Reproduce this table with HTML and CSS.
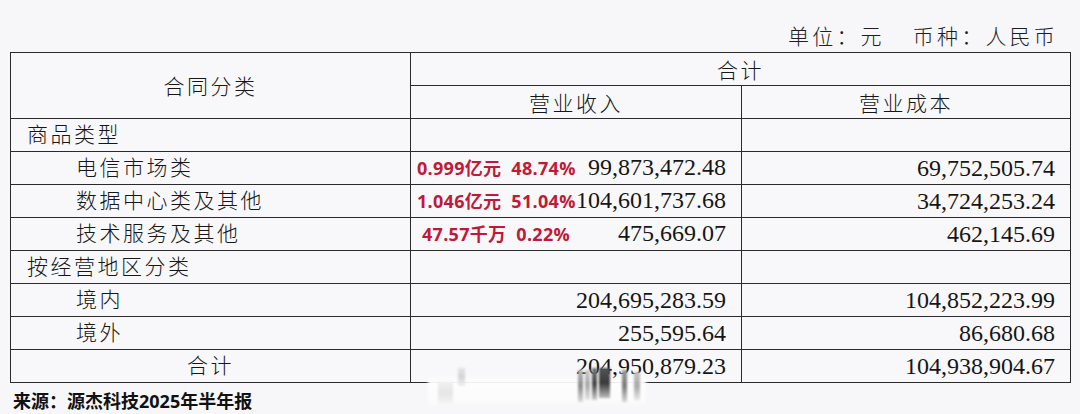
FILE: index.html
```html
<!DOCTYPE html>
<html lang="zh-CN">
<head>
<meta charset="utf-8">
<title>合同分类</title>
<link rel="stylesheet" href="styles.css">
</head>
<body>
<div class="page">
  <div class="unit"><span>单位：元</span><span class="unit-gap"></span><span>币种：人民币</span></div>
  <table class="report">
    <colgroup><col class="c1"><col class="c2"><col class="c3"></colgroup>
    <thead>
      <tr><th rowspan="2" class="head-main">合同分类</th><th colspan="2">合计</th></tr>
      <tr><th>营业收入</th><th>营业成本</th></tr>
    </thead>
    <tbody>
      <tr><td class="lv1">商品类型</td><td></td><td></td></tr>
      <tr><td class="lv2">电信市场类</td><td class="num"><div class="split"><span class="note">0.999亿元&nbsp;&nbsp;48.74%</span><span>99,873,472.48</span></div></td><td class="num">69,752,505.74</td></tr>
      <tr><td class="lv2">数据中心类及其他</td><td class="num"><div class="split"><span class="note">1.046亿元&nbsp;&nbsp;51.04%</span><span>104,601,737.68</span></div></td><td class="num">34,724,253.24</td></tr>
      <tr><td class="lv2">技术服务及其他</td><td class="num"><div class="split"><span class="note">&nbsp;47.57千万&nbsp;&nbsp;0.22%</span><span>475,669.07</span></div></td><td class="num">462,145.69</td></tr>
      <tr><td class="lv1">按经营地区分类</td><td></td><td></td></tr>
      <tr><td class="lv2">境内</td><td class="num">204,695,283.59</td><td class="num">104,852,223.99</td></tr>
      <tr><td class="lv2">境外</td><td class="num">255,595.64</td><td class="num">86,680.68</td></tr>
      <tr><td class="total">合计</td><td class="num">204,950,879.23</td><td class="num">104,938,904.67</td></tr>
    </tbody>
  </table>
  <div class="source">来源：源杰科技2025年半年报</div>
  <div class="smudge" aria-hidden="true">
    <i class="band"></i>
    <i class="bar b1"></i><i class="bar b2"></i><i class="bar b3"></i><i class="bar b4"></i>
    <i class="bar b5"></i><i class="bar b6"></i><i class="bar b7"></i><i class="bar b8"></i>
  </div>
</div>
</body>
</html>
```

FILE: styles.css
```css
* { box-sizing: border-box; }
html, body { margin: 0; padding: 0; background: #f7f7f9; }
body {
  width: 1080px;
  height: 414px;
  overflow: hidden;
  color: #161616;
  font-family: "Liberation Serif", "Noto Sans CJK SC", serif;
}
.page { position: relative; width: 1080px; height: 414px; }

.unit {
  display: flex;
  justify-content: flex-end;
  align-items: flex-end;
  height: 52px;
  padding: 0 22px 5px 0;
  font-family: "Noto Sans CJK SC", sans-serif;
  font-weight: 300;
  font-size: 21px;
  letter-spacing: 3.2px;
  line-height: 24px;
  color: #1e1e1e;
}
.unit-gap { width: 28px; }

.report {
  margin-left: 10px;
  width: 1060px;
  table-layout: fixed;
  border-collapse: collapse;
  background: #f8f8fa;
}
.c1 { width: 400px; }
.c2 { width: 331px; }
.c3 { width: 329px; }

.report tr { height: 33px; }
.report th, .report td {
  border: 1px solid #2a2a2a;
  padding: 0;
  line-height: 31px;
  white-space: nowrap;
}
.report th {
  font-family: "Noto Sans CJK SC", sans-serif;
  font-weight: 300;
  font-size: 21px;
  letter-spacing: 2.5px;
  text-align: center;
}

.report .lv1, .report .lv2, .report .total {
  font-family: "Noto Sans CJK SC", sans-serif;
  font-weight: 300;
  font-size: 21px;
  letter-spacing: 2.5px;
  line-height: 28px;
  vertical-align: top;
}
.report .lv1 { padding-left: 16px; }
.report .lv2 { padding-left: 65px; }
.report .total { text-align: center; }

.report .num {
  font-family: "Liberation Serif", serif;
  font-size: 24px;
  text-align: right;
  padding-right: 15px;
}
.split {
  display: flex;
  justify-content: space-between;
  align-items: baseline;
  padding-left: 6px;
}
.note {
  font-family: "Open Sans", "Noto Sans CJK SC", sans-serif;
  font-weight: 700;
  font-size: 18px;
  color: #c01a38;
  letter-spacing: 0.3px;
}

.source {
  padding: 7px 0 0 13px;
  font-family: "Open Sans", "Noto Sans CJK SC", sans-serif;
  font-weight: 700;
  font-size: 18px;
  line-height: 22px;
  color: #111;
}

/* faint blurred watermark remnant lying over the table's lower edge */
.smudge {
  position: absolute;
  left: 428px;
  top: 366px;
  width: 218px;
  height: 44px;
  pointer-events: none;
}
.smudge i { position: absolute; display: block; }
.band {
  left: 0; right: 0; top: 10px; height: 30px;
  background: linear-gradient(to bottom, rgba(255,255,255,0) 0%, #fdfdfd 20%, #fbfbfb 80%, rgba(255,255,255,0) 100%);
  filter: blur(1.5px);
}
.bar { filter: blur(1.2px); }
.b1 { left: 10px; width: 15px; top: 16px; height: 22px; background: linear-gradient(#f0f0f0, #e6e6e6, #f4f4f4); }
.b2 { left: 30px; width: 7px; top: 2px; height: 18px; background: linear-gradient(#e4e4e4, #d4d4d4, #f0f0f0); }
.b3 { left: 150px; width: 5px; top: 4px; height: 32px; background: linear-gradient(#bbb, #8a8a8a, #dcdcdc); }
.b4 { left: 157px; width: 5px; top: 4px; height: 30px; background: linear-gradient(#ccc, #a8a8a8, #e6e6e6); }
.b5 { left: 164px; width: 5px; top: 2px; height: 32px; background: linear-gradient(#777, #444, #cfcfcf); }
.b6 { left: 171px; width: 11px; top: 2px; height: 30px; background: linear-gradient(#555, #3a3a3a, #bdbdbd); }
.b7 { left: 194px; width: 5px; top: 4px; height: 32px; background: linear-gradient(#9a9a9a, #7a7a7a, #d8d8d8); }
.b8 { left: 206px; width: 6px; top: 6px; height: 28px; background: linear-gradient(#c6c6c6, #a9a9a9, #e8e8e8); }
```
